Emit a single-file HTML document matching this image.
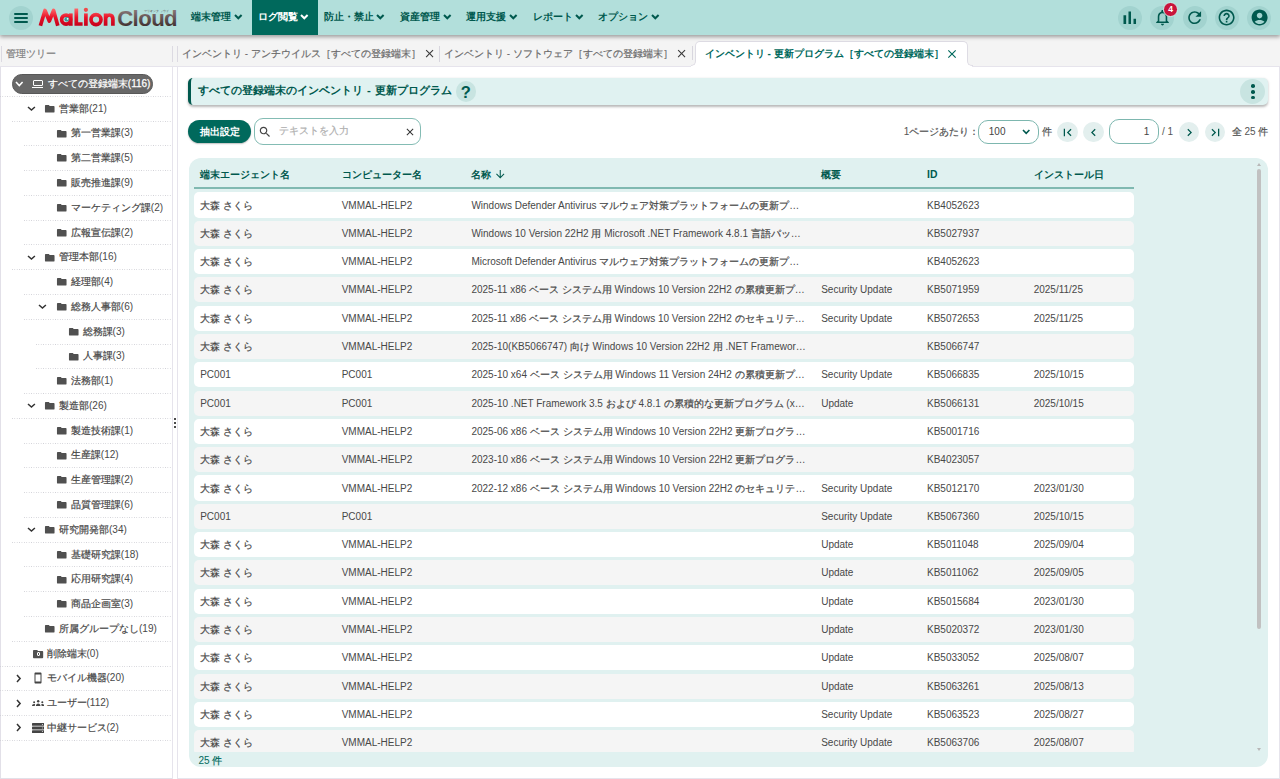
<!DOCTYPE html>
<html lang="ja"><head><meta charset="utf-8"><title>MaLion Cloud</title>
<style>
*{box-sizing:border-box;margin:0;padding:0}
html,body{width:1280px;height:779px;overflow:hidden;background:#fff;font-family:"Liberation Sans", sans-serif;position:relative}
.a{position:absolute}
.j{-webkit-text-stroke:0.2px currentColor}
#hdr{position:absolute;left:0;top:0;width:1280px;height:35px;background:#b2dfdb;box-shadow:0 2px 4px rgba(0,0,0,.36);z-index:5}
.circ{border-radius:50%;background:#a2d3cf}
.dot{height:1px;background-image:linear-gradient(to right,#d0d0d6 50%,transparent 50%);background-size:2.4px 1px}
.logo{font-size:21px;font-weight:bold;line-height:28px;white-space:nowrap;letter-spacing:-0.5px}
.l1{color:#e0001a;font-style:italic;background:linear-gradient(#ff5a5a,#d0001a 60%,#b80018);-webkit-background-clip:text;color:transparent}
.l2{background:linear-gradient(#7a6a6a,#3a2c2c);-webkit-background-clip:text;color:transparent;margin-left:2px}
</style></head><body>
<div id="hdr">
<div class="a circ" style="left:8.5px;top:5.5px;width:24px;height:24px"></div>
<div class="a" style="left:13.6px;top:12.9px;width:14px;height:2px;background:#00594e;border-radius:1px"></div>
<div class="a" style="left:13.6px;top:16.7px;width:14px;height:2px;background:#00594e;border-radius:1px"></div>
<div class="a" style="left:13.6px;top:20.6px;width:14px;height:2px;background:#00594e;border-radius:1px"></div>
<svg class="a" style="left:0;top:0" width="190" height="35" viewBox="0 0 190 35">
<defs>
<linearGradient id="gr" x1="0" y1="0" x2="0" y2="1" gradientUnits="objectBoundingBox"><stop offset="0" stop-color="#ff6a6a"/><stop offset="0.45" stop-color="#e8102a"/><stop offset="1" stop-color="#c4001c"/></linearGradient>
<linearGradient id="gb" x1="0" y1="8" x2="0" y2="27" gradientUnits="userSpaceOnUse"><stop offset="0" stop-color="#907f7f"/><stop offset="1" stop-color="#3e2e2e"/></linearGradient>
<linearGradient id="grs" x1="0" y1="8" x2="0" y2="27" gradientUnits="userSpaceOnUse"><stop offset="0" stop-color="#ff7070"/><stop offset="0.5" stop-color="#e81228"/><stop offset="1" stop-color="#c0001a"/></linearGradient>
</defs>
<g fill="none" stroke="url(#grs)" stroke-width="3.7" stroke-linejoin="round" stroke-linecap="butt">
<polyline points="40.4,25.8 45,10.5 49.3,21 53.6,10.5 57.8,25.8" stroke-linejoin="round"/>
<circle cx="66.1" cy="19.6" r="4.5"/>
<line x1="70.8" y1="13.4" x2="70.8" y2="25.8"/>
<polyline points="76.3,8.6 76.3,24 82.6,24" stroke-linejoin="miter"/>
<line x1="85.9" y1="13.4" x2="85.9" y2="25.8"/>
<circle cx="96" cy="19.6" r="5"/>
<path d="M105.6 25.8V13.4M105.6 19.6c0-3 1.6-4.6 3.9-4.6s3.4 1.6 3.4 4.6v6.2"/>
</g>
<circle cx="85.9" cy="9.8" r="2.1" fill="#f04a4a"/>
<circle cx="66.8" cy="19.2" r="2.3" fill="#3a9a98"/>
<circle cx="67.6" cy="18.8" r="0.9" fill="#fff"/>
<g font-family="Liberation Sans" font-weight="bold" fill="url(#gb)">
<text x="117.2" y="26" font-size="22.2" letter-spacing="-0.6">Cloud</text>
</g>
<text x="143.6" y="12" font-size="3.4" fill="#4a3a3a" letter-spacing="0.2">マリオンクラウド</text>
</svg>
<div class="a" style="left:191.4px;top:9.5px;font-size:10px;line-height:14px;font-weight:bold;color:#00594e;white-space:nowrap">端末管理</div>
<svg class="a" style="left:232.76px;top:13.25px" width="10.6" height="7.3"><polyline points="2,2 5.3,5.3 8.6,2" fill="none" stroke="#00594e" stroke-width="2" stroke-linecap="butt" stroke-linejoin="miter"/></svg>
<div class="a" style="left:252px;top:0;width:66px;height:35px;background:#00695c"></div>
<div class="a" style="left:257.7px;top:9.5px;font-size:10px;line-height:14px;font-weight:bold;color:#fff;white-space:nowrap">ログ閲覧</div>
<svg class="a" style="left:299.06px;top:13.25px" width="10.6" height="7.3"><polyline points="2,2 5.3,5.3 8.6,2" fill="none" stroke="#fff" stroke-width="2" stroke-linecap="butt" stroke-linejoin="miter"/></svg>
<div class="a" style="left:323.5px;top:9.5px;font-size:10px;line-height:14px;font-weight:bold;color:#00594e;white-space:nowrap">防止・禁止</div>
<svg class="a" style="left:374.70px;top:13.25px" width="10.6" height="7.3"><polyline points="2,2 5.3,5.3 8.6,2" fill="none" stroke="#00594e" stroke-width="2" stroke-linecap="butt" stroke-linejoin="miter"/></svg>
<div class="a" style="left:400.2px;top:9.5px;font-size:10px;line-height:14px;font-weight:bold;color:#00594e;white-space:nowrap">資産管理</div>
<svg class="a" style="left:441.56px;top:13.25px" width="10.6" height="7.3"><polyline points="2,2 5.3,5.3 8.6,2" fill="none" stroke="#00594e" stroke-width="2" stroke-linecap="butt" stroke-linejoin="miter"/></svg>
<div class="a" style="left:466.3px;top:9.5px;font-size:10px;line-height:14px;font-weight:bold;color:#00594e;white-space:nowrap">運用支援</div>
<svg class="a" style="left:507.66px;top:13.25px" width="10.6" height="7.3"><polyline points="2,2 5.3,5.3 8.6,2" fill="none" stroke="#00594e" stroke-width="2" stroke-linecap="butt" stroke-linejoin="miter"/></svg>
<div class="a" style="left:533px;top:9.5px;font-size:10px;line-height:14px;font-weight:bold;color:#00594e;white-space:nowrap">レポート</div>
<svg class="a" style="left:574.36px;top:13.25px" width="10.6" height="7.3"><polyline points="2,2 5.3,5.3 8.6,2" fill="none" stroke="#00594e" stroke-width="2" stroke-linecap="butt" stroke-linejoin="miter"/></svg>
<div class="a" style="left:598.3px;top:9.5px;font-size:10px;line-height:14px;font-weight:bold;color:#00594e;white-space:nowrap">オプション</div>
<svg class="a" style="left:649.50px;top:13.25px" width="10.6" height="7.3"><polyline points="2,2 5.3,5.3 8.6,2" fill="none" stroke="#00594e" stroke-width="2" stroke-linecap="butt" stroke-linejoin="miter"/></svg>
<div class="a circ" style="left:1117.8px;top:5.5px;width:24px;height:24px"></div>
<div class="a" style="left:1119.05px;top:6.85px;"><svg width="21.5" height="21.5" viewBox="0 0 24 24" style="display:block"><path fill="#00594e" d="M5 9.2h3V19H5zM10.6 5h2.8v14h-2.8zm5.6 8H19v6h-2.8z"/></svg></div>
<div class="a circ" style="left:1150.2px;top:5.5px;width:24px;height:24px"></div>
<div class="a" style="left:1152.7px;top:8.1px;"><svg width="19" height="19" viewBox="0 0 24 24" style="display:block"><path fill="#00594e" d="M12 22c1.1 0 2-.9 2-2h-4c0 1.1.89 2 2 2zm6-6v-5c0-3.07-1.64-5.64-4.5-6.32V4c0-.83-.67-1.5-1.5-1.5s-1.5.67-1.5 1.5v.68C7.63 5.36 6 7.92 6 11v5l-2 2v1h16v-1l-2-2zm-2 1H8v-6c0-2.48 1.51-4.5 4-4.5s4 2.02 4 4.5v6z"/></svg></div>
<div class="a circ" style="left:1182.6px;top:5.5px;width:24px;height:24px"></div>
<div class="a" style="left:1184.95px;top:7.95px;"><svg width="19.3" height="19.3" viewBox="0 0 24 24" style="display:block"><path fill="#00594e" d="M17.65 6.35C16.2 4.9 14.21 4 12 4c-4.42 0-7.99 3.58-7.99 8s3.57 8 7.99 8c3.73 0 6.84-2.55 7.73-6h-2.08c-.82 2.33-3.04 4-5.65 4-3.31 0-6-2.69-6-6s2.69-6 6-6c1.66 0 3.14.69 4.22 1.78L13 11h7V4l-2.35 2.35z"/></svg></div>
<div class="a circ" style="left:1215.0px;top:5.5px;width:24px;height:24px"></div>
<div class="a" style="left:1217.4px;top:8.0px;"><svg width="19.2" height="19.2" viewBox="0 0 24 24" style="display:block"><path fill="#00594e" d="M11 18h2v-2h-2v2zm1-16C6.48 2 2 6.48 2 12s4.48 10 10 10 10-4.48 10-10S17.52 2 12 2zm0 18c-4.41 0-8-3.59-8-8s3.59-8 8-8 8 3.59 8 8-3.59 8-8 8zm0-14c-2.21 0-4 1.79-4 4h2c0-1.1.9-2 2-2s2 .9 2 2c0 2-3 1.75-3 5h2c0-2.25 3-2.5 3-5 0-2.21-1.79-4-4-4z"/></svg></div>
<div class="a circ" style="left:1247.3999999999999px;top:5.5px;width:24px;height:24px"></div>
<div class="a" style="left:1249.8px;top:8.0px;"><svg width="19.2" height="19.2" viewBox="0 0 24 24" style="display:block"><path fill="#00594e" d="M12 2C6.48 2 2 6.48 2 12s4.48 10 10 10 10-4.48 10-10S17.52 2 12 2zm0 4c1.93 0 3.5 1.57 3.5 3.5S13.93 13 12 13s-3.5-1.57-3.5-3.5S10.07 6 12 6zm0 14c-2.03 0-4.43-.82-6.14-2.88C7.55 15.8 9.68 15 12 15s4.45.8 6.14 2.12C16.43 19.18 14.03 20 12 20z"/></svg></div>
<div class="a" style="left:1163px;top:1.5px;width:15px;height:15px;border-radius:50%;background:#c8153c;border:1px solid #c8f5ee;color:#fff;font-size:8.5px;font-weight:bold;line-height:13px;text-align:center">4</div>
</div>
<div class="a" style="left:0;top:35px;width:1280px;height:31.5px;background:#f4f4f4;border-bottom:1.5px solid #e6e4ec"></div>
<div class="a" style="left:1px;top:45.5px;width:1px;height:16.5px;background:#dcdae2"></div>
<div class="a" style="left:5.6px;top:47px;font-size:10px;line-height:14px;color:#808080"><span class="j">管理ツリー</span></div>
<div class="a" style="left:171.5px;top:45.5px;width:1px;height:16.5px;background:#dcdae2"></div>
<div class="a" style="left:176.7px;top:45.5px;width:1px;height:16.5px;background:#dcdae2"></div>
<div class="a" style="left:181.9px;top:47px;font-size:10px;line-height:14px;color:#6b6b6b;white-space:nowrap"><span class="j">インベントリ</span> - <span class="j">アンチウイルス［すべての登録端末］</span></div>
<div class="a" style="left:422.5px;top:46.8px;"><svg width="13.2" height="13.2" viewBox="0 0 24 24" style="display:block"><path fill="#3a3a3a" d="M19 6.41L17.59 5 12 10.59 6.41 5 5 6.41 10.59 12 5 17.59 6.41 19 12 13.41 17.59 19 19 17.59 13.41 12z"/></svg></div>
<div class="a" style="left:439.4px;top:45.5px;width:1px;height:16.5px;background:#d8d6de"></div>
<div class="a" style="left:444px;top:47px;font-size:10px;line-height:14px;color:#6b6b6b;white-space:nowrap"><span class="j">インベントリ</span> - <span class="j">ソフトウェア［すべての登録端末］</span></div>
<div class="a" style="left:674.8px;top:46.8px;"><svg width="13.2" height="13.2" viewBox="0 0 24 24" style="display:block"><path fill="#3a3a3a" d="M19 6.41L17.59 5 12 10.59 6.41 5 5 6.41 10.59 12 5 17.59 6.41 19 12 13.41 17.59 19 19 17.59 13.41 12z"/></svg></div>
<div class="a" style="left:692.2px;top:45.5px;width:1px;height:16.5px;background:#d8d6de"></div>
<div class="a" style="left:695px;top:41px;width:273px;height:26px;background:#fff;border:1.2px solid #dedce4;border-bottom:none;border-radius:5px 5px 0 0"></div>
<div class="a" style="left:691px;top:61px;width:5px;height:6px;background:#fff"></div>
<div class="a" style="left:690.5px;top:60px;width:5.5px;height:5.8px;background:#f4f4f4;border-right:1.2px solid #dedce4;border-bottom:1.2px solid #dedce4;border-radius:0 0 5px 0"></div>
<div class="a" style="left:967px;top:61px;width:5px;height:6px;background:#fff"></div>
<div class="a" style="left:967px;top:60px;width:5.5px;height:5.8px;background:#f4f4f4;border-left:1.2px solid #dedce4;border-bottom:1.2px solid #dedce4;border-radius:0 0 0 5px"></div>
<div class="a" style="left:704.7px;top:47px;font-size:10px;line-height:14px;color:#00695c;font-weight:bold;white-space:nowrap">インベントリ - 更新プログラム［すべての登録端末］</div>
<div class="a" style="left:944.6px;top:46.9px;"><svg width="14" height="14" viewBox="0 0 24 24" style="display:block"><path fill="#00695c" d="M19 6.41L17.59 5 12 10.59 6.41 5 5 6.41 10.59 12 5 17.59 6.41 19 12 13.41 17.59 19 19 17.59 13.41 12z"/></svg></div>
<div class="a" style="left:0;top:67px;width:1px;height:712px;background:#e2e0e8"></div>
<div class="a" style="left:0;top:777.5px;width:173px;height:1.5px;background:#e2e0e8"></div>
<div class="a" style="left:172px;top:66px;width:1px;height:713px;background:#e6e4ec"></div>
<div class="a" style="left:176.7px;top:66px;width:1px;height:713px;background:#e6e4ec"></div>
<div class="a" style="left:173.8px;top:418.1px;width:2px;height:2px;border-radius:1px;background:#111"></div>
<div class="a" style="left:173.8px;top:421.8px;width:2px;height:2px;border-radius:1px;background:#111"></div>
<div class="a" style="left:173.8px;top:425.6px;width:2px;height:2px;border-radius:1px;background:#111"></div>
<div class="a dot" style="left:0px;top:95.80px;width:172px"></div>
<div class="a" style="left:12px;top:74.4px;width:140.8px;height:19.35px;border-radius:9.7px;background:#686868;border:0.8px solid #585858"></div>
<svg class="a" style="left:13.50px;top:80.35px" width="10.6" height="7.5"><polyline points="2,2 5.3,5.5 8.6,2" fill="none" stroke="#fff" stroke-width="1.6" stroke-linecap="butt" stroke-linejoin="miter"/></svg>
<div class="a" style="left:32.5px;top:79.60px;width:10.1px;height:6.8px;border:1.5px solid #fff;border-radius:1px"></div>
<div class="a" style="left:31.9px;top:87.10px;width:11.6px;height:1.4px;background:#fff"></div>
<div class="a" style="left:47.8px;top:76.89999999999999px;font-size:10px;line-height:14px;color:#fff;white-space:nowrap;-webkit-text-stroke:0.25px #fff"><span class="j">すべての登録端末</span>(116)</div>
<div class="a dot" style="left:12px;top:120.57px;width:160px"></div>
<svg class="a" style="left:25.55px;top:105.22px" width="10.9" height="7.1"><polyline points="2,2 5.45,5.1 8.9,2" fill="none" stroke="#333" stroke-width="1.5" stroke-linecap="butt" stroke-linejoin="miter"/></svg>
<div class="a" style="left:44.05px;top:102.92px;"><svg width="11.5" height="11.5" viewBox="0 0 24 24" style="display:block"><path fill="#505050" d="M10 4H4c-1.1 0-1.99.9-1.99 2L2 18c0 1.1.9 2 2 2h16c1.1 0 2-.9 2-2V8c0-1.1-.9-2-2-2h-8l-2-2z"/></svg></div>
<div class="a" style="left:59.0px;top:101.66999999999999px;font-size:10px;line-height:14px;color:#484848;white-space:nowrap;"><span class="j">営業部</span>(21)</div>
<div class="a dot" style="left:24px;top:145.34px;width:148px"></div>
<div class="a" style="left:55.85px;top:127.69px;"><svg width="11.5" height="11.5" viewBox="0 0 24 24" style="display:block"><path fill="#505050" d="M10 4H4c-1.1 0-1.99.9-1.99 2L2 18c0 1.1.9 2 2 2h16c1.1 0 2-.9 2-2V8c0-1.1-.9-2-2-2h-8l-2-2z"/></svg></div>
<div class="a" style="left:70.8px;top:126.44px;font-size:10px;line-height:14px;color:#484848;white-space:nowrap;"><span class="j">第一営業課</span>(3)</div>
<div class="a dot" style="left:24px;top:170.11px;width:148px"></div>
<div class="a" style="left:55.85px;top:152.46px;"><svg width="11.5" height="11.5" viewBox="0 0 24 24" style="display:block"><path fill="#505050" d="M10 4H4c-1.1 0-1.99.9-1.99 2L2 18c0 1.1.9 2 2 2h16c1.1 0 2-.9 2-2V8c0-1.1-.9-2-2-2h-8l-2-2z"/></svg></div>
<div class="a" style="left:70.8px;top:151.21px;font-size:10px;line-height:14px;color:#484848;white-space:nowrap;"><span class="j">第二営業課</span>(5)</div>
<div class="a dot" style="left:24px;top:194.88px;width:148px"></div>
<div class="a" style="left:55.85px;top:177.23px;"><svg width="11.5" height="11.5" viewBox="0 0 24 24" style="display:block"><path fill="#505050" d="M10 4H4c-1.1 0-1.99.9-1.99 2L2 18c0 1.1.9 2 2 2h16c1.1 0 2-.9 2-2V8c0-1.1-.9-2-2-2h-8l-2-2z"/></svg></div>
<div class="a" style="left:70.8px;top:175.98px;font-size:10px;line-height:14px;color:#484848;white-space:nowrap;"><span class="j">販売推進課</span>(9)</div>
<div class="a dot" style="left:24px;top:219.65px;width:148px"></div>
<div class="a" style="left:55.85px;top:202.0px;"><svg width="11.5" height="11.5" viewBox="0 0 24 24" style="display:block"><path fill="#505050" d="M10 4H4c-1.1 0-1.99.9-1.99 2L2 18c0 1.1.9 2 2 2h16c1.1 0 2-.9 2-2V8c0-1.1-.9-2-2-2h-8l-2-2z"/></svg></div>
<div class="a" style="left:70.8px;top:200.74999999999997px;font-size:10px;line-height:14px;color:#484848;white-space:nowrap;"><span class="j">マーケティング課</span>(2)</div>
<div class="a dot" style="left:24px;top:244.42px;width:148px"></div>
<div class="a" style="left:55.85px;top:226.77px;"><svg width="11.5" height="11.5" viewBox="0 0 24 24" style="display:block"><path fill="#505050" d="M10 4H4c-1.1 0-1.99.9-1.99 2L2 18c0 1.1.9 2 2 2h16c1.1 0 2-.9 2-2V8c0-1.1-.9-2-2-2h-8l-2-2z"/></svg></div>
<div class="a" style="left:70.8px;top:225.52px;font-size:10px;line-height:14px;color:#484848;white-space:nowrap;"><span class="j">広報宣伝課</span>(2)</div>
<div class="a dot" style="left:12px;top:269.19px;width:160px"></div>
<svg class="a" style="left:25.55px;top:253.84px" width="10.9" height="7.1"><polyline points="2,2 5.45,5.1 8.9,2" fill="none" stroke="#333" stroke-width="1.5" stroke-linecap="butt" stroke-linejoin="miter"/></svg>
<div class="a" style="left:44.05px;top:251.54px;"><svg width="11.5" height="11.5" viewBox="0 0 24 24" style="display:block"><path fill="#505050" d="M10 4H4c-1.1 0-1.99.9-1.99 2L2 18c0 1.1.9 2 2 2h16c1.1 0 2-.9 2-2V8c0-1.1-.9-2-2-2h-8l-2-2z"/></svg></div>
<div class="a" style="left:59.0px;top:250.29000000000002px;font-size:10px;line-height:14px;color:#484848;white-space:nowrap;"><span class="j">管理本部</span>(16)</div>
<div class="a dot" style="left:24px;top:293.96px;width:148px"></div>
<div class="a" style="left:55.85px;top:276.31px;"><svg width="11.5" height="11.5" viewBox="0 0 24 24" style="display:block"><path fill="#505050" d="M10 4H4c-1.1 0-1.99.9-1.99 2L2 18c0 1.1.9 2 2 2h16c1.1 0 2-.9 2-2V8c0-1.1-.9-2-2-2h-8l-2-2z"/></svg></div>
<div class="a" style="left:70.8px;top:275.06px;font-size:10px;line-height:14px;color:#484848;white-space:nowrap;"><span class="j">経理部</span>(4)</div>
<div class="a dot" style="left:24px;top:318.73px;width:148px"></div>
<svg class="a" style="left:37.35px;top:303.38px" width="10.9" height="7.1"><polyline points="2,2 5.45,5.1 8.9,2" fill="none" stroke="#333" stroke-width="1.5" stroke-linecap="butt" stroke-linejoin="miter"/></svg>
<div class="a" style="left:55.85px;top:301.08px;"><svg width="11.5" height="11.5" viewBox="0 0 24 24" style="display:block"><path fill="#505050" d="M10 4H4c-1.1 0-1.99.9-1.99 2L2 18c0 1.1.9 2 2 2h16c1.1 0 2-.9 2-2V8c0-1.1-.9-2-2-2h-8l-2-2z"/></svg></div>
<div class="a" style="left:70.8px;top:299.83000000000004px;font-size:10px;line-height:14px;color:#484848;white-space:nowrap;"><span class="j">総務人事部</span>(6)</div>
<div class="a dot" style="left:36px;top:343.50px;width:136px"></div>
<div class="a" style="left:67.65px;top:325.85px;"><svg width="11.5" height="11.5" viewBox="0 0 24 24" style="display:block"><path fill="#505050" d="M10 4H4c-1.1 0-1.99.9-1.99 2L2 18c0 1.1.9 2 2 2h16c1.1 0 2-.9 2-2V8c0-1.1-.9-2-2-2h-8l-2-2z"/></svg></div>
<div class="a" style="left:82.6px;top:324.6px;font-size:10px;line-height:14px;color:#484848;white-space:nowrap;"><span class="j">総務課</span>(3)</div>
<div class="a dot" style="left:36px;top:368.27px;width:136px"></div>
<div class="a" style="left:67.65px;top:350.62px;"><svg width="11.5" height="11.5" viewBox="0 0 24 24" style="display:block"><path fill="#505050" d="M10 4H4c-1.1 0-1.99.9-1.99 2L2 18c0 1.1.9 2 2 2h16c1.1 0 2-.9 2-2V8c0-1.1-.9-2-2-2h-8l-2-2z"/></svg></div>
<div class="a" style="left:82.6px;top:349.37px;font-size:10px;line-height:14px;color:#484848;white-space:nowrap;"><span class="j">人事課</span>(3)</div>
<div class="a dot" style="left:24px;top:393.04px;width:148px"></div>
<div class="a" style="left:55.85px;top:375.39px;"><svg width="11.5" height="11.5" viewBox="0 0 24 24" style="display:block"><path fill="#505050" d="M10 4H4c-1.1 0-1.99.9-1.99 2L2 18c0 1.1.9 2 2 2h16c1.1 0 2-.9 2-2V8c0-1.1-.9-2-2-2h-8l-2-2z"/></svg></div>
<div class="a" style="left:70.8px;top:374.14000000000004px;font-size:10px;line-height:14px;color:#484848;white-space:nowrap;"><span class="j">法務部</span>(1)</div>
<div class="a dot" style="left:12px;top:417.81px;width:160px"></div>
<svg class="a" style="left:25.55px;top:402.46px" width="10.9" height="7.1"><polyline points="2,2 5.45,5.1 8.9,2" fill="none" stroke="#333" stroke-width="1.5" stroke-linecap="butt" stroke-linejoin="miter"/></svg>
<div class="a" style="left:44.05px;top:400.16px;"><svg width="11.5" height="11.5" viewBox="0 0 24 24" style="display:block"><path fill="#505050" d="M10 4H4c-1.1 0-1.99.9-1.99 2L2 18c0 1.1.9 2 2 2h16c1.1 0 2-.9 2-2V8c0-1.1-.9-2-2-2h-8l-2-2z"/></svg></div>
<div class="a" style="left:59.0px;top:398.91px;font-size:10px;line-height:14px;color:#484848;white-space:nowrap;"><span class="j">製造部</span>(26)</div>
<div class="a dot" style="left:24px;top:442.58px;width:148px"></div>
<div class="a" style="left:55.85px;top:424.93px;"><svg width="11.5" height="11.5" viewBox="0 0 24 24" style="display:block"><path fill="#505050" d="M10 4H4c-1.1 0-1.99.9-1.99 2L2 18c0 1.1.9 2 2 2h16c1.1 0 2-.9 2-2V8c0-1.1-.9-2-2-2h-8l-2-2z"/></svg></div>
<div class="a" style="left:70.8px;top:423.68px;font-size:10px;line-height:14px;color:#484848;white-space:nowrap;"><span class="j">製造技術課</span>(1)</div>
<div class="a dot" style="left:24px;top:467.35px;width:148px"></div>
<div class="a" style="left:55.85px;top:449.7px;"><svg width="11.5" height="11.5" viewBox="0 0 24 24" style="display:block"><path fill="#505050" d="M10 4H4c-1.1 0-1.99.9-1.99 2L2 18c0 1.1.9 2 2 2h16c1.1 0 2-.9 2-2V8c0-1.1-.9-2-2-2h-8l-2-2z"/></svg></div>
<div class="a" style="left:70.8px;top:448.45000000000005px;font-size:10px;line-height:14px;color:#484848;white-space:nowrap;"><span class="j">生産課</span>(12)</div>
<div class="a dot" style="left:24px;top:492.12px;width:148px"></div>
<div class="a" style="left:55.85px;top:474.47px;"><svg width="11.5" height="11.5" viewBox="0 0 24 24" style="display:block"><path fill="#505050" d="M10 4H4c-1.1 0-1.99.9-1.99 2L2 18c0 1.1.9 2 2 2h16c1.1 0 2-.9 2-2V8c0-1.1-.9-2-2-2h-8l-2-2z"/></svg></div>
<div class="a" style="left:70.8px;top:473.22px;font-size:10px;line-height:14px;color:#484848;white-space:nowrap;"><span class="j">生産管理課</span>(2)</div>
<div class="a dot" style="left:24px;top:516.89px;width:148px"></div>
<div class="a" style="left:55.85px;top:499.24px;"><svg width="11.5" height="11.5" viewBox="0 0 24 24" style="display:block"><path fill="#505050" d="M10 4H4c-1.1 0-1.99.9-1.99 2L2 18c0 1.1.9 2 2 2h16c1.1 0 2-.9 2-2V8c0-1.1-.9-2-2-2h-8l-2-2z"/></svg></div>
<div class="a" style="left:70.8px;top:497.99px;font-size:10px;line-height:14px;color:#484848;white-space:nowrap;"><span class="j">品質管理課</span>(6)</div>
<div class="a dot" style="left:12px;top:541.66px;width:160px"></div>
<svg class="a" style="left:25.55px;top:526.31px" width="10.9" height="7.1"><polyline points="2,2 5.45,5.1 8.9,2" fill="none" stroke="#333" stroke-width="1.5" stroke-linecap="butt" stroke-linejoin="miter"/></svg>
<div class="a" style="left:44.05px;top:524.01px;"><svg width="11.5" height="11.5" viewBox="0 0 24 24" style="display:block"><path fill="#505050" d="M10 4H4c-1.1 0-1.99.9-1.99 2L2 18c0 1.1.9 2 2 2h16c1.1 0 2-.9 2-2V8c0-1.1-.9-2-2-2h-8l-2-2z"/></svg></div>
<div class="a" style="left:59.0px;top:522.76px;font-size:10px;line-height:14px;color:#484848;white-space:nowrap;"><span class="j">研究開発部</span>(34)</div>
<div class="a dot" style="left:24px;top:566.43px;width:148px"></div>
<div class="a" style="left:55.85px;top:548.78px;"><svg width="11.5" height="11.5" viewBox="0 0 24 24" style="display:block"><path fill="#505050" d="M10 4H4c-1.1 0-1.99.9-1.99 2L2 18c0 1.1.9 2 2 2h16c1.1 0 2-.9 2-2V8c0-1.1-.9-2-2-2h-8l-2-2z"/></svg></div>
<div class="a" style="left:70.8px;top:547.53px;font-size:10px;line-height:14px;color:#484848;white-space:nowrap;"><span class="j">基礎研究課</span>(18)</div>
<div class="a dot" style="left:24px;top:591.20px;width:148px"></div>
<div class="a" style="left:55.85px;top:573.55px;"><svg width="11.5" height="11.5" viewBox="0 0 24 24" style="display:block"><path fill="#505050" d="M10 4H4c-1.1 0-1.99.9-1.99 2L2 18c0 1.1.9 2 2 2h16c1.1 0 2-.9 2-2V8c0-1.1-.9-2-2-2h-8l-2-2z"/></svg></div>
<div class="a" style="left:70.8px;top:572.3px;font-size:10px;line-height:14px;color:#484848;white-space:nowrap;"><span class="j">応用研究課</span>(4)</div>
<div class="a dot" style="left:24px;top:615.97px;width:148px"></div>
<div class="a" style="left:55.85px;top:598.32px;"><svg width="11.5" height="11.5" viewBox="0 0 24 24" style="display:block"><path fill="#505050" d="M10 4H4c-1.1 0-1.99.9-1.99 2L2 18c0 1.1.9 2 2 2h16c1.1 0 2-.9 2-2V8c0-1.1-.9-2-2-2h-8l-2-2z"/></svg></div>
<div class="a" style="left:70.8px;top:597.0699999999999px;font-size:10px;line-height:14px;color:#484848;white-space:nowrap;"><span class="j">商品企画室</span>(3)</div>
<div class="a dot" style="left:12px;top:640.74px;width:160px"></div>
<div class="a" style="left:44.05px;top:623.09px;"><svg width="11.5" height="11.5" viewBox="0 0 24 24" style="display:block"><path fill="#505050" d="M10 4H4c-1.1 0-1.99.9-1.99 2L2 18c0 1.1.9 2 2 2h16c1.1 0 2-.9 2-2V8c0-1.1-.9-2-2-2h-8l-2-2z"/></svg></div>
<div class="a" style="left:59.0px;top:621.8399999999999px;font-size:10px;line-height:14px;color:#484848;white-space:nowrap;"><span class="j">所属グループなし</span>(19)</div>
<div class="a dot" style="left:0px;top:665.51px;width:172px"></div>
<div class="a" style="left:31.7px;top:647.51px;"><svg width="12.2" height="12.2" viewBox="0 0 24 24" style="display:block"><path fill="#505050" d="M10 4H4c-1.1 0-1.99.9-1.99 2L2 18c0 1.1.9 2 2 2h16c1.1 0 2-.9 2-2V8c0-1.1-.9-2-2-2h-8l-2-2z"/></svg></div>
<div class="a" style="left:36.6px;top:652.01px;width:3.6px;height:3.6px;border:0.8px solid #fff;border-radius:1px"></div>
<div class="a" style="left:46.5px;top:646.61px;font-size:10px;line-height:14px;color:#484848;white-space:nowrap;"><span class="j">削除端末</span>(0)</div>
<div class="a dot" style="left:0px;top:690.28px;width:172px"></div>
<svg class="a" style="left:15.45px;top:672.93px" width="7.1" height="10.9"><polyline points="2,2 5.1,5.45 2,8.9" fill="none" stroke="#333" stroke-width="1.5" stroke-linecap="butt" stroke-linejoin="miter"/></svg>
<div class="a" style="left:31.6px;top:672.38px;"><svg width="12" height="12" viewBox="0 0 24 24" style="display:block"><path fill="#444" d="M17 1.01L7 1c-1.1 0-2 .9-2 2v18c0 1.1.9 2 2 2h10c1.1 0 2-.9 2-2V3c0-1.1-.9-1.99-2-1.99zM17 19H7V5h10v14z"/></svg></div>
<div class="a" style="left:46.5px;top:671.38px;font-size:10px;line-height:14px;color:#484848;white-space:nowrap;"><span class="j">モバイル機器</span>(20)</div>
<div class="a dot" style="left:0px;top:715.05px;width:172px"></div>
<svg class="a" style="left:15.45px;top:697.70px" width="7.1" height="10.9"><polyline points="2,2 5.1,5.45 2,8.9" fill="none" stroke="#333" stroke-width="1.5" stroke-linecap="butt" stroke-linejoin="miter"/></svg>
<svg class="a" style="left:31.6px;top:700.15px" width="12.4" height="6" viewBox="0 0 12.4 6"><g fill="#444"><circle cx="6.2" cy="1.3" r="1.2"/><path d="M3.9 6c0-1.6 1-2.6 2.3-2.6S8.5 4.4 8.5 6z"/><circle cx="2.1" cy="2.2" r="1"/><path d="M0 6c0-1.3.8-2 2-2 .5 0 .9.1 1.2.4C2.9 4.8 2.8 5.4 2.8 6z"/><circle cx="10.3" cy="2.2" r="1"/><path d="M12.4 6c0-1.3-.8-2-2-2-.5 0-.9.1-1.2.4.3.4.4 1 .4 1.6z"/></g></svg>
<div class="a" style="left:46.5px;top:696.15px;font-size:10px;line-height:14px;color:#484848;white-space:nowrap;"><span class="j">ユーザー</span>(112)</div>
<div class="a dot" style="left:0px;top:739.82px;width:172px"></div>
<svg class="a" style="left:15.45px;top:722.47px" width="7.1" height="10.9"><polyline points="2,2 5.1,5.45 2,8.9" fill="none" stroke="#333" stroke-width="1.5" stroke-linecap="butt" stroke-linejoin="miter"/></svg>
<svg class="a" style="left:31.6px;top:722.92px" width="12.4" height="10" viewBox="0 0 12.4 10"><g fill="#444"><rect x="0" y="0" width="12.4" height="2.8" rx="0.6"/><rect x="0" y="3.6" width="12.4" height="2.8" rx="0.6"/><rect x="0" y="7.2" width="12.4" height="2.8" rx="0.6"/></g><g fill="#fff"><circle cx="10.4" cy="1.4" r="0.5"/><circle cx="10.4" cy="5" r="0.5"/><circle cx="10.4" cy="8.6" r="0.5"/></g></svg>
<div class="a" style="left:46.5px;top:720.92px;font-size:10px;line-height:14px;color:#484848;white-space:nowrap;"><span class="j">中継サービス</span>(2)</div>
<div class="a" style="left:1278.5px;top:66px;width:1.5px;height:713px;background:#e6e4ec"></div>
<div class="a" style="left:177px;top:777.5px;width:1103px;height:1.5px;background:#e6e4ec"></div>
<div class="a" style="left:188.3px;top:77.7px;width:1079.8px;height:27.5px;background:#e0f2f1;border-left:3.6px solid #00594e;border-radius:5px;box-shadow:0 1.5px 2.5px rgba(0,0,0,0.28)"></div>
<div class="a" style="left:197.7px;top:82px;font-size:11.4px;line-height:16px;font-weight:bold;color:#00594e;white-space:nowrap;word-spacing:1.2px">すべての登録端末のインベントリ - 更新プログラム</div>
<div class="a" style="left:455.6px;top:81.2px;width:20.6px;height:20.6px;border-radius:50%;background:#c8e4e1"></div>
<div class="a" style="left:455.6px;top:83.6px;width:20.6px;text-align:center;font-size:16.5px;line-height:16px;font-weight:bold;color:#00594e">?</div>
<div class="a" style="left:1240.2px;top:79.1px;width:25px;height:25px;border-radius:50%;background:#c8e4e1"></div>
<div class="a" style="left:1251.1px;top:84.4px;width:3.6px;height:3.6px;border-radius:50%;background:#00594e"></div>
<div class="a" style="left:1251.1px;top:90.0px;width:3.6px;height:3.6px;border-radius:50%;background:#00594e"></div>
<div class="a" style="left:1251.1px;top:95.60000000000001px;width:3.6px;height:3.6px;border-radius:50%;background:#00594e"></div>
<div class="a" style="left:188.4px;top:120.1px;width:62.8px;height:23.2px;border-radius:11.6px;background:#00695c;box-shadow:0 1px 1.5px rgba(0,0,0,.25)"></div>
<div class="a" style="left:200.1px;top:125.3px;font-size:10px;line-height:14px;color:#fff;font-weight:bold;white-space:nowrap">抽出設定</div>
<div class="a" style="left:254px;top:118.2px;width:167.4px;height:27.2px;border-radius:9px;border:1.3px solid #84bcb4;border-bottom-width:1.9px;background:#fff"></div>
<div class="a" style="left:258.0px;top:124.8px;"><svg width="14" height="14" viewBox="0 0 24 24" style="display:block"><path fill="#444" d="M15.5 14h-.79l-.28-.27C15.41 12.59 16 11.11 16 9.5 16 5.91 13.09 3 9.5 3S3 5.91 3 9.5 5.91 16 9.5 16c1.61 0 3.09-.59 4.23-1.57l.27.28v.79l5 4.99L20.49 19l-4.99-5zm-6 0C7.01 14 5 11.99 5 9.5S7.01 5 9.5 5 14 7.01 14 9.5 11.99 14 9.5 14z"/></svg></div>
<div class="a" style="left:278.9px;top:124.1px;font-size:10px;line-height:14px;color:#b0b0b0;white-space:nowrap"><span class="j">テキストを入力</span></div>
<div class="a" style="left:404.3px;top:125.9px;"><svg width="12" height="12" viewBox="0 0 24 24" style="display:block"><path fill="#333" d="M19 6.41L17.59 5 12 10.59 6.41 5 5 6.41 10.59 12 5 17.59 6.41 19 12 13.41 17.59 19 19 17.59 13.41 12z"/></svg></div>
<div class="a" style="left:903.8px;top:125px;font-size:10px;line-height:14px;color:#555;white-space:nowrap">1<span class="j">ページあたり：</span></div>
<div class="a" style="left:978.1px;top:119.5px;width:60.6px;height:24.1px;border-radius:10px;border:1.3px solid #7db7af;background:#fff"></div>
<div class="a" style="left:988.8px;top:125px;font-size:10px;line-height:14px;color:#444">100</div>
<svg class="a" style="left:1021.40px;top:128.35px" width="10.4" height="7.3"><polyline points="2,2 5.2,5.3 8.4,2" fill="none" stroke="#00594e" stroke-width="1.6" stroke-linecap="butt" stroke-linejoin="miter"/></svg>
<div class="a" style="left:1041.9px;top:125px;font-size:10px;line-height:14px;color:#555"><span class="j">件</span></div>
<div class="a" style="left:1057.4499999999998px;top:121.8px;width:20.3px;height:20.3px;border-radius:50%;background:#e3efee"></div>
<div class="a" style="left:1060.1px;top:124.8px;"><svg width="15" height="15" viewBox="0 0 24 24" style="display:block"><path fill="#00594e" d="M18.41 16.59L13.82 12l4.59-4.59L17 6l-6 6 6 6zM6 6h2v12H6z"/></svg></div>
<div class="a" style="left:1083.35px;top:121.8px;width:20.3px;height:20.3px;border-radius:50%;background:#e3efee"></div>
<div class="a" style="left:1086.0px;top:124.8px;"><svg width="15" height="15" viewBox="0 0 24 24" style="display:block"><path fill="#00594e" d="M15.41 7.41L14 6l-6 6 6 6 1.41-1.41L10.83 12z"/></svg></div>
<div class="a" style="left:1178.9499999999998px;top:121.8px;width:20.3px;height:20.3px;border-radius:50%;background:#e3efee"></div>
<div class="a" style="left:1181.6px;top:124.8px;"><svg width="15" height="15" viewBox="0 0 24 24" style="display:block"><path fill="#00594e" d="M10 6L8.59 7.41 13.17 12l-4.58 4.59L10 18l6-6z"/></svg></div>
<div class="a" style="left:1205.05px;top:121.8px;width:20.3px;height:20.3px;border-radius:50%;background:#e3efee"></div>
<div class="a" style="left:1207.7px;top:124.8px;"><svg width="15" height="15" viewBox="0 0 24 24" style="display:block"><path fill="#00594e" d="M5.59 7.41L10.18 12l-4.59 4.59L7 18l6-6-6-6zM16 6h2v12h-2z"/></svg></div>
<div class="a" style="left:1109.2px;top:119.3px;width:49.8px;height:24.4px;border-radius:10px;border:1.3px solid #7db7af;background:#fff"></div>
<div class="a" style="left:1109.2px;top:125px;width:40px;text-align:right;font-size:10px;line-height:14px;color:#444">1</div>
<div class="a" style="left:1161.9px;top:125px;font-size:10px;line-height:14px;color:#555;white-space:nowrap">/ 1</div>
<div class="a" style="left:1231.7px;top:125px;font-size:10px;line-height:14px;color:#555;white-space:nowrap"><span class="j">全</span> 25 <span class="j">件</span></div>
<div class="a" style="left:188.9px;top:158px;width:1079.1px;height:608.8px;border-radius:12px;background:#e0f1f0;overflow:hidden" id="card">
</div>
<div class="a" style="left:200.2px;top:167.5px;font-size:10px;line-height:14px;font-weight:bold;color:#00594e;white-space:nowrap">端末エージェント名</div>
<div class="a" style="left:341.7px;top:167.5px;font-size:10px;line-height:14px;font-weight:bold;color:#00594e;white-space:nowrap">コンピューター名</div>
<div class="a" style="left:471.4px;top:167.5px;font-size:10px;line-height:14px;font-weight:bold;color:#00594e;white-space:nowrap">名称</div>
<div class="a" style="left:821.2px;top:167.5px;font-size:10px;line-height:14px;font-weight:bold;color:#00594e;white-space:nowrap">概要</div>
<div class="a" style="left:927px;top:167.5px;font-size:10.4px;line-height:14px;font-weight:bold;color:#00594e;white-space:nowrap">ID</div>
<div class="a" style="left:1033.7px;top:167.5px;font-size:10px;line-height:14px;font-weight:bold;color:#00594e;white-space:nowrap">インストール日</div>
<div class="a" style="left:493.65px;top:168.05px;"><svg width="12.5" height="12.5" viewBox="0 0 24 24" style="display:block"><path fill="#00594e" d="M20 12l-1.41-1.41L13 16.17V4h-2v12.17l-5.58-5.59L4 12l8 8 8-8z"/></svg></div>
<div class="a" style="left:194.2px;top:186.8px;width:939.7px;height:2px;background:#80b9b1"></div>
<div class="a" style="left:0;top:192.4px;width:1280px;height:359.9px;overflow:hidden;clip-path:inset(0 0 0 0)"></div>
<div class="a" id="rows" style="left:0;top:0;width:1280px;height:752.3px;overflow:hidden">
<div class="a" style="left:194.4px;top:192.40px;width:939.5px;height:25.2px;border-radius:5px;background:#fff"></div>
<div class="a" style="left:200.2px;top:198.5px;font-size:10px;line-height:14px;color:#484848;white-space:nowrap;"><span class="j">大森</span> <span class="j">さくら</span></div>
<div class="a" style="left:341.7px;top:198.5px;font-size:10px;line-height:14px;color:#484848;white-space:nowrap;">VMMAL-HELP2</div>
<div class="a" style="left:471.4px;top:198.5px;font-size:10px;line-height:14px;color:#484848;white-space:nowrap;">Windows Defender Antivirus <span class="j">マルウェア対策プラットフォームの更新プ</span>…</div>
<div class="a" style="left:927px;top:198.5px;font-size:10px;line-height:14px;color:#484848;white-space:nowrap;">KB4052623</div>
<div class="a" style="left:194.4px;top:220.70px;width:939.5px;height:25.2px;border-radius:5px;background:#f5f5f5"></div>
<div class="a" style="left:200.2px;top:226.8px;font-size:10px;line-height:14px;color:#484848;white-space:nowrap;"><span class="j">大森</span> <span class="j">さくら</span></div>
<div class="a" style="left:341.7px;top:226.8px;font-size:10px;line-height:14px;color:#484848;white-space:nowrap;">VMMAL-HELP2</div>
<div class="a" style="left:471.4px;top:226.8px;font-size:10px;line-height:14px;color:#484848;white-space:nowrap;">Windows 10 Version 22H2 <span class="j">用</span> Microsoft .NET Framework 4.8.1 <span class="j">言語パッ</span>…</div>
<div class="a" style="left:927px;top:226.8px;font-size:10px;line-height:14px;color:#484848;white-space:nowrap;">KB5027937</div>
<div class="a" style="left:194.4px;top:249.00px;width:939.5px;height:25.2px;border-radius:5px;background:#fff"></div>
<div class="a" style="left:200.2px;top:255.1px;font-size:10px;line-height:14px;color:#484848;white-space:nowrap;"><span class="j">大森</span> <span class="j">さくら</span></div>
<div class="a" style="left:341.7px;top:255.1px;font-size:10px;line-height:14px;color:#484848;white-space:nowrap;">VMMAL-HELP2</div>
<div class="a" style="left:471.4px;top:255.1px;font-size:10px;line-height:14px;color:#484848;white-space:nowrap;">Microsoft Defender Antivirus <span class="j">マルウェア対策プラットフォームの更新プ</span>…</div>
<div class="a" style="left:927px;top:255.1px;font-size:10px;line-height:14px;color:#484848;white-space:nowrap;">KB4052623</div>
<div class="a" style="left:194.4px;top:277.30px;width:939.5px;height:25.2px;border-radius:5px;background:#f5f5f5"></div>
<div class="a" style="left:200.2px;top:283.4px;font-size:10px;line-height:14px;color:#484848;white-space:nowrap;"><span class="j">大森</span> <span class="j">さくら</span></div>
<div class="a" style="left:341.7px;top:283.4px;font-size:10px;line-height:14px;color:#484848;white-space:nowrap;">VMMAL-HELP2</div>
<div class="a" style="left:471.4px;top:283.4px;font-size:10px;line-height:14px;color:#484848;white-space:nowrap;">2025-11 x86 <span class="j">ベース</span> <span class="j">システム用</span> Windows 10 Version 22H2 <span class="j">の累積更新プ</span>…</div>
<div class="a" style="left:821.2px;top:283.4px;font-size:10px;line-height:14px;color:#484848;white-space:nowrap;">Security Update</div>
<div class="a" style="left:927px;top:283.4px;font-size:10px;line-height:14px;color:#484848;white-space:nowrap;">KB5071959</div>
<div class="a" style="left:1033.7px;top:283.4px;font-size:10px;line-height:14px;color:#484848;white-space:nowrap;">2025/11/25</div>
<div class="a" style="left:194.4px;top:305.60px;width:939.5px;height:25.2px;border-radius:5px;background:#fff"></div>
<div class="a" style="left:200.2px;top:311.7px;font-size:10px;line-height:14px;color:#484848;white-space:nowrap;"><span class="j">大森</span> <span class="j">さくら</span></div>
<div class="a" style="left:341.7px;top:311.7px;font-size:10px;line-height:14px;color:#484848;white-space:nowrap;">VMMAL-HELP2</div>
<div class="a" style="left:471.4px;top:311.7px;font-size:10px;line-height:14px;color:#484848;white-space:nowrap;">2025-11 x86 <span class="j">ベース</span> <span class="j">システム用</span> Windows 10 Version 22H2 <span class="j">のセキュリテ</span>…</div>
<div class="a" style="left:821.2px;top:311.7px;font-size:10px;line-height:14px;color:#484848;white-space:nowrap;">Security Update</div>
<div class="a" style="left:927px;top:311.7px;font-size:10px;line-height:14px;color:#484848;white-space:nowrap;">KB5072653</div>
<div class="a" style="left:1033.7px;top:311.7px;font-size:10px;line-height:14px;color:#484848;white-space:nowrap;">2025/11/25</div>
<div class="a" style="left:194.4px;top:333.90px;width:939.5px;height:25.2px;border-radius:5px;background:#f5f5f5"></div>
<div class="a" style="left:200.2px;top:340.0px;font-size:10px;line-height:14px;color:#484848;white-space:nowrap;"><span class="j">大森</span> <span class="j">さくら</span></div>
<div class="a" style="left:341.7px;top:340.0px;font-size:10px;line-height:14px;color:#484848;white-space:nowrap;">VMMAL-HELP2</div>
<div class="a" style="left:471.4px;top:340.0px;font-size:10px;line-height:14px;color:#484848;white-space:nowrap;">2025-10(KB5066747) <span class="j">向け</span> Windows 10 Version 22H2 <span class="j">用</span> .NET Framewor…</div>
<div class="a" style="left:927px;top:340.0px;font-size:10px;line-height:14px;color:#484848;white-space:nowrap;">KB5066747</div>
<div class="a" style="left:194.4px;top:362.20px;width:939.5px;height:25.2px;border-radius:5px;background:#fff"></div>
<div class="a" style="left:200.2px;top:368.3px;font-size:10px;line-height:14px;color:#484848;white-space:nowrap;">PC001</div>
<div class="a" style="left:341.7px;top:368.3px;font-size:10px;line-height:14px;color:#484848;white-space:nowrap;">PC001</div>
<div class="a" style="left:471.4px;top:368.3px;font-size:10px;line-height:14px;color:#484848;white-space:nowrap;">2025-10 x64 <span class="j">ベース</span> <span class="j">システム用</span> Windows 11 Version 24H2 <span class="j">の累積更新プ</span>…</div>
<div class="a" style="left:821.2px;top:368.3px;font-size:10px;line-height:14px;color:#484848;white-space:nowrap;">Security Update</div>
<div class="a" style="left:927px;top:368.3px;font-size:10px;line-height:14px;color:#484848;white-space:nowrap;">KB5066835</div>
<div class="a" style="left:1033.7px;top:368.3px;font-size:10px;line-height:14px;color:#484848;white-space:nowrap;">2025/10/15</div>
<div class="a" style="left:194.4px;top:390.50px;width:939.5px;height:25.2px;border-radius:5px;background:#f5f5f5"></div>
<div class="a" style="left:200.2px;top:396.6px;font-size:10px;line-height:14px;color:#484848;white-space:nowrap;">PC001</div>
<div class="a" style="left:341.7px;top:396.6px;font-size:10px;line-height:14px;color:#484848;white-space:nowrap;">PC001</div>
<div class="a" style="left:471.4px;top:396.6px;font-size:10px;line-height:14px;color:#484848;white-space:nowrap;">2025-10 .NET Framework 3.5 <span class="j">および</span> 4.8.1 <span class="j">の累積的な更新プログラム</span> (x…</div>
<div class="a" style="left:821.2px;top:396.6px;font-size:10px;line-height:14px;color:#484848;white-space:nowrap;">Update</div>
<div class="a" style="left:927px;top:396.6px;font-size:10px;line-height:14px;color:#484848;white-space:nowrap;">KB5066131</div>
<div class="a" style="left:1033.7px;top:396.6px;font-size:10px;line-height:14px;color:#484848;white-space:nowrap;">2025/10/15</div>
<div class="a" style="left:194.4px;top:418.80px;width:939.5px;height:25.2px;border-radius:5px;background:#fff"></div>
<div class="a" style="left:200.2px;top:424.9px;font-size:10px;line-height:14px;color:#484848;white-space:nowrap;"><span class="j">大森</span> <span class="j">さくら</span></div>
<div class="a" style="left:341.7px;top:424.9px;font-size:10px;line-height:14px;color:#484848;white-space:nowrap;">VMMAL-HELP2</div>
<div class="a" style="left:471.4px;top:424.9px;font-size:10px;line-height:14px;color:#484848;white-space:nowrap;">2025-06 x86 <span class="j">ベース</span> <span class="j">システム用</span> Windows 10 Version 22H2 <span class="j">更新プログラ</span>…</div>
<div class="a" style="left:927px;top:424.9px;font-size:10px;line-height:14px;color:#484848;white-space:nowrap;">KB5001716</div>
<div class="a" style="left:194.4px;top:447.10px;width:939.5px;height:25.2px;border-radius:5px;background:#f5f5f5"></div>
<div class="a" style="left:200.2px;top:453.2px;font-size:10px;line-height:14px;color:#484848;white-space:nowrap;"><span class="j">大森</span> <span class="j">さくら</span></div>
<div class="a" style="left:341.7px;top:453.2px;font-size:10px;line-height:14px;color:#484848;white-space:nowrap;">VMMAL-HELP2</div>
<div class="a" style="left:471.4px;top:453.2px;font-size:10px;line-height:14px;color:#484848;white-space:nowrap;">2023-10 x86 <span class="j">ベース</span> <span class="j">システム用</span> Windows 10 Version 22H2 <span class="j">更新プログラ</span>…</div>
<div class="a" style="left:927px;top:453.2px;font-size:10px;line-height:14px;color:#484848;white-space:nowrap;">KB4023057</div>
<div class="a" style="left:194.4px;top:475.40px;width:939.5px;height:25.2px;border-radius:5px;background:#fff"></div>
<div class="a" style="left:200.2px;top:481.5px;font-size:10px;line-height:14px;color:#484848;white-space:nowrap;"><span class="j">大森</span> <span class="j">さくら</span></div>
<div class="a" style="left:341.7px;top:481.5px;font-size:10px;line-height:14px;color:#484848;white-space:nowrap;">VMMAL-HELP2</div>
<div class="a" style="left:471.4px;top:481.5px;font-size:10px;line-height:14px;color:#484848;white-space:nowrap;">2022-12 x86 <span class="j">ベース</span> <span class="j">システム用</span> Windows 10 Version 22H2 <span class="j">のセキュリテ</span>…</div>
<div class="a" style="left:821.2px;top:481.5px;font-size:10px;line-height:14px;color:#484848;white-space:nowrap;">Security Update</div>
<div class="a" style="left:927px;top:481.5px;font-size:10px;line-height:14px;color:#484848;white-space:nowrap;">KB5012170</div>
<div class="a" style="left:1033.7px;top:481.5px;font-size:10px;line-height:14px;color:#484848;white-space:nowrap;">2023/01/30</div>
<div class="a" style="left:194.4px;top:503.70px;width:939.5px;height:25.2px;border-radius:5px;background:#f5f5f5"></div>
<div class="a" style="left:200.2px;top:509.8px;font-size:10px;line-height:14px;color:#484848;white-space:nowrap;">PC001</div>
<div class="a" style="left:341.7px;top:509.8px;font-size:10px;line-height:14px;color:#484848;white-space:nowrap;">PC001</div>
<div class="a" style="left:821.2px;top:509.8px;font-size:10px;line-height:14px;color:#484848;white-space:nowrap;">Security Update</div>
<div class="a" style="left:927px;top:509.8px;font-size:10px;line-height:14px;color:#484848;white-space:nowrap;">KB5067360</div>
<div class="a" style="left:1033.7px;top:509.8px;font-size:10px;line-height:14px;color:#484848;white-space:nowrap;">2025/10/15</div>
<div class="a" style="left:194.4px;top:532.00px;width:939.5px;height:25.2px;border-radius:5px;background:#fff"></div>
<div class="a" style="left:200.2px;top:538.1px;font-size:10px;line-height:14px;color:#484848;white-space:nowrap;"><span class="j">大森</span> <span class="j">さくら</span></div>
<div class="a" style="left:341.7px;top:538.1px;font-size:10px;line-height:14px;color:#484848;white-space:nowrap;">VMMAL-HELP2</div>
<div class="a" style="left:821.2px;top:538.1px;font-size:10px;line-height:14px;color:#484848;white-space:nowrap;">Update</div>
<div class="a" style="left:927px;top:538.1px;font-size:10px;line-height:14px;color:#484848;white-space:nowrap;">KB5011048</div>
<div class="a" style="left:1033.7px;top:538.1px;font-size:10px;line-height:14px;color:#484848;white-space:nowrap;">2025/09/04</div>
<div class="a" style="left:194.4px;top:560.30px;width:939.5px;height:25.2px;border-radius:5px;background:#f5f5f5"></div>
<div class="a" style="left:200.2px;top:566.4px;font-size:10px;line-height:14px;color:#484848;white-space:nowrap;"><span class="j">大森</span> <span class="j">さくら</span></div>
<div class="a" style="left:341.7px;top:566.4px;font-size:10px;line-height:14px;color:#484848;white-space:nowrap;">VMMAL-HELP2</div>
<div class="a" style="left:821.2px;top:566.4px;font-size:10px;line-height:14px;color:#484848;white-space:nowrap;">Update</div>
<div class="a" style="left:927px;top:566.4px;font-size:10px;line-height:14px;color:#484848;white-space:nowrap;">KB5011062</div>
<div class="a" style="left:1033.7px;top:566.4px;font-size:10px;line-height:14px;color:#484848;white-space:nowrap;">2025/09/05</div>
<div class="a" style="left:194.4px;top:588.60px;width:939.5px;height:25.2px;border-radius:5px;background:#fff"></div>
<div class="a" style="left:200.2px;top:594.7px;font-size:10px;line-height:14px;color:#484848;white-space:nowrap;"><span class="j">大森</span> <span class="j">さくら</span></div>
<div class="a" style="left:341.7px;top:594.7px;font-size:10px;line-height:14px;color:#484848;white-space:nowrap;">VMMAL-HELP2</div>
<div class="a" style="left:821.2px;top:594.7px;font-size:10px;line-height:14px;color:#484848;white-space:nowrap;">Update</div>
<div class="a" style="left:927px;top:594.7px;font-size:10px;line-height:14px;color:#484848;white-space:nowrap;">KB5015684</div>
<div class="a" style="left:1033.7px;top:594.7px;font-size:10px;line-height:14px;color:#484848;white-space:nowrap;">2023/01/30</div>
<div class="a" style="left:194.4px;top:616.90px;width:939.5px;height:25.2px;border-radius:5px;background:#f5f5f5"></div>
<div class="a" style="left:200.2px;top:623.0px;font-size:10px;line-height:14px;color:#484848;white-space:nowrap;"><span class="j">大森</span> <span class="j">さくら</span></div>
<div class="a" style="left:341.7px;top:623.0px;font-size:10px;line-height:14px;color:#484848;white-space:nowrap;">VMMAL-HELP2</div>
<div class="a" style="left:821.2px;top:623.0px;font-size:10px;line-height:14px;color:#484848;white-space:nowrap;">Update</div>
<div class="a" style="left:927px;top:623.0px;font-size:10px;line-height:14px;color:#484848;white-space:nowrap;">KB5020372</div>
<div class="a" style="left:1033.7px;top:623.0px;font-size:10px;line-height:14px;color:#484848;white-space:nowrap;">2023/01/30</div>
<div class="a" style="left:194.4px;top:645.20px;width:939.5px;height:25.2px;border-radius:5px;background:#fff"></div>
<div class="a" style="left:200.2px;top:651.3px;font-size:10px;line-height:14px;color:#484848;white-space:nowrap;"><span class="j">大森</span> <span class="j">さくら</span></div>
<div class="a" style="left:341.7px;top:651.3px;font-size:10px;line-height:14px;color:#484848;white-space:nowrap;">VMMAL-HELP2</div>
<div class="a" style="left:821.2px;top:651.3px;font-size:10px;line-height:14px;color:#484848;white-space:nowrap;">Update</div>
<div class="a" style="left:927px;top:651.3px;font-size:10px;line-height:14px;color:#484848;white-space:nowrap;">KB5033052</div>
<div class="a" style="left:1033.7px;top:651.3px;font-size:10px;line-height:14px;color:#484848;white-space:nowrap;">2025/08/07</div>
<div class="a" style="left:194.4px;top:673.50px;width:939.5px;height:25.2px;border-radius:5px;background:#f5f5f5"></div>
<div class="a" style="left:200.2px;top:679.6px;font-size:10px;line-height:14px;color:#484848;white-space:nowrap;"><span class="j">大森</span> <span class="j">さくら</span></div>
<div class="a" style="left:341.7px;top:679.6px;font-size:10px;line-height:14px;color:#484848;white-space:nowrap;">VMMAL-HELP2</div>
<div class="a" style="left:821.2px;top:679.6px;font-size:10px;line-height:14px;color:#484848;white-space:nowrap;">Update</div>
<div class="a" style="left:927px;top:679.6px;font-size:10px;line-height:14px;color:#484848;white-space:nowrap;">KB5063261</div>
<div class="a" style="left:1033.7px;top:679.6px;font-size:10px;line-height:14px;color:#484848;white-space:nowrap;">2025/08/13</div>
<div class="a" style="left:194.4px;top:701.80px;width:939.5px;height:25.2px;border-radius:5px;background:#fff"></div>
<div class="a" style="left:200.2px;top:707.9px;font-size:10px;line-height:14px;color:#484848;white-space:nowrap;"><span class="j">大森</span> <span class="j">さくら</span></div>
<div class="a" style="left:341.7px;top:707.9px;font-size:10px;line-height:14px;color:#484848;white-space:nowrap;">VMMAL-HELP2</div>
<div class="a" style="left:821.2px;top:707.9px;font-size:10px;line-height:14px;color:#484848;white-space:nowrap;">Security Update</div>
<div class="a" style="left:927px;top:707.9px;font-size:10px;line-height:14px;color:#484848;white-space:nowrap;">KB5063523</div>
<div class="a" style="left:1033.7px;top:707.9px;font-size:10px;line-height:14px;color:#484848;white-space:nowrap;">2025/08/27</div>
<div class="a" style="left:194.4px;top:730.10px;width:939.5px;height:25.2px;border-radius:5px;background:#f5f5f5"></div>
<div class="a" style="left:200.2px;top:736.2px;font-size:10px;line-height:14px;color:#484848;white-space:nowrap;"><span class="j">大森</span> <span class="j">さくら</span></div>
<div class="a" style="left:341.7px;top:736.2px;font-size:10px;line-height:14px;color:#484848;white-space:nowrap;">VMMAL-HELP2</div>
<div class="a" style="left:821.2px;top:736.2px;font-size:10px;line-height:14px;color:#484848;white-space:nowrap;">Security Update</div>
<div class="a" style="left:927px;top:736.2px;font-size:10px;line-height:14px;color:#484848;white-space:nowrap;">KB5063706</div>
<div class="a" style="left:1033.7px;top:736.2px;font-size:10px;line-height:14px;color:#484848;white-space:nowrap;">2025/08/07</div>
</div>
<div class="a" style="left:198.5px;top:754.3px;font-size:10px;line-height:14px;color:#00695c;white-space:nowrap">25 <span class="j">件</span></div>
<div class="a" style="left:1256.8px;top:169px;width:4.6px;height:459.7px;border-radius:2.3px;background:#c1c1c1"></div>
<div class="a" style="left:1256.6px;top:163px;width:0;height:0;border-left:2.5px solid transparent;border-right:2.5px solid transparent;border-bottom:3.3px solid #b8b8b8"></div>
<div class="a" style="left:1256.6px;top:747.8px;width:0;height:0;border-left:2.5px solid transparent;border-right:2.5px solid transparent;border-top:3.3px solid #b8b8b8"></div>
</body></html>
